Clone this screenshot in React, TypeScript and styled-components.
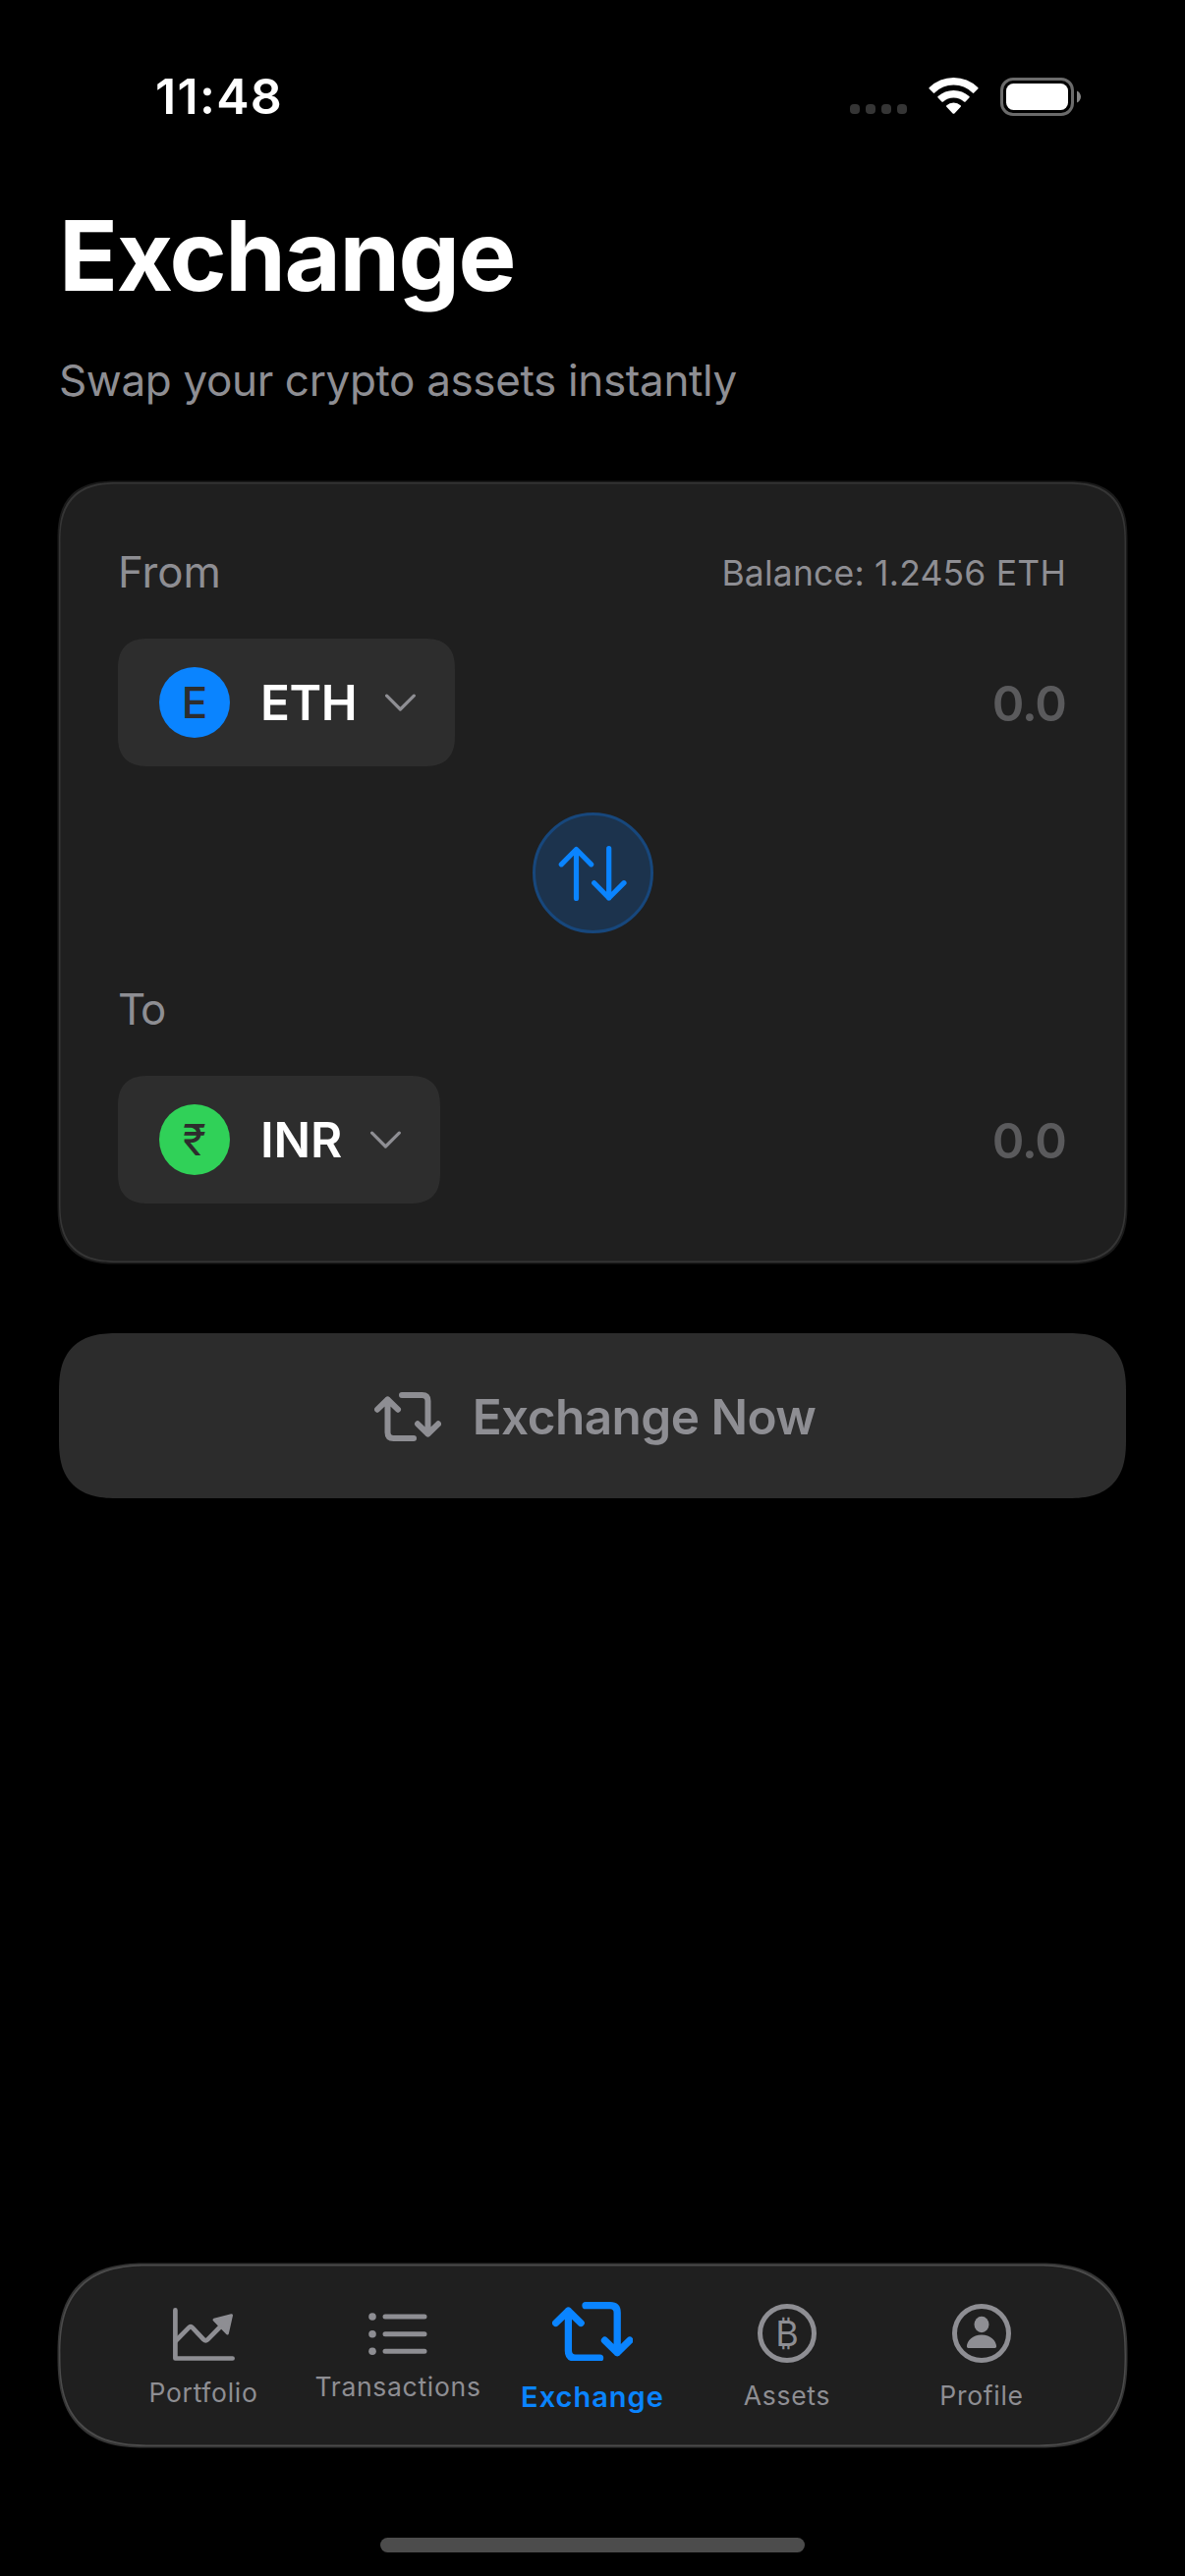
import React from 'react';
import styled, { createGlobalStyle, css } from 'styled-components';

const colors = {
  blue: '#0a84ff',
  green: '#30d158',
  gray: '#8e8e93',
  panel: '#1f1f1f',
  pill: '#2d2d2d',
  button: '#2c2c2c',
};

/* Smooth iOS style corners, with a plain rounded fallback. */
const smoothCorners = (plain: number, smooth: number) => css`
  border-radius: ${plain}px;
  @supports (corner-shape: superellipse(1.4)) {
    border-radius: ${smooth}px;
    corner-shape: superellipse(1.38);
  }
`;

const GlobalStyle = createGlobalStyle`
  * { box-sizing: border-box; }
  body {
    margin: 0;
    background: #000;
    font-family: Inter, "Liberation Sans", sans-serif;
  }
  button { font: inherit; border: 0; margin: 0; color: inherit; }
  svg { display: block; flex: none; }
`;

const Screen = styled.div`
  display: flex;
  flex-direction: column;
  width: 1206px;
  height: 2622px;
  background: #000;
  overflow: hidden;
`;

const StatusBar = styled.header`
  display: flex;
  justify-content: space-between;
  align-items: center;
  height: 120px;
  margin-top: 38px;
  padding: 0 106px 0 158px;
`;

const Clock = styled.time`
  font-size: 50px;
  font-weight: 600;
  line-height: 60px;
  letter-spacing: 1.3px;
  color: #fff;
`;

const StatusIcons = styled.div`
  display: flex;
  align-items: center;
`;

const SignalDots = styled.div`
  display: flex;
  gap: 6px;
  margin: 25px 22px 0 0;
`;

const SignalDot = styled.span`
  width: 10px;
  height: 10px;
  border-radius: 4px;
  background: #353535;
`;

const BatteryWrap = styled.span`
  margin-left: 22px;
`;

const Content = styled.main`
  display: flex;
  flex-direction: column;
  flex: 1;
  padding: 41px 60px 0;
`;

const Title = styled.h1`
  margin: 0;
  font-size: 99px;
  font-weight: 700;
  line-height: 122px;
  letter-spacing: -1.5px;
  color: #fff;
`;

const Subtitle = styled.p`
  margin: 39px 0 77px;
  font-size: 44px;
  line-height: 54px;
  letter-spacing: -0.36px;
  color: ${colors.gray};
`;

const SwapCard = styled.section`
  display: flex;
  flex-direction: column;
  padding: 60px;
  background: ${colors.panel};
  ${smoothCorners(48, 60)}
  box-shadow: 0 0 0 1.5px rgba(255, 255, 255, 0.1),
    inset 0 0 0 1.5px rgba(255, 255, 255, 0.1);
`;

const FieldHeader = styled.div`
  display: flex;
  justify-content: space-between;
  height: 99px;
`;

const FieldLabel = styled.span<{ $tracking: number }>`
  font-size: 43.8px;
  line-height: 64px;
  letter-spacing: ${(p) => p.$tracking}px;
  color: ${colors.gray};
`;

const Balance = styled.span`
  margin-right: 1px;
  font-size: 35.5px;
  line-height: 66px;
  letter-spacing: 0.2px;
  color: ${colors.gray};
`;

const FieldRow = styled.div`
  display: flex;
  justify-content: space-between;
  align-items: center;
`;

const CurrencyPill = styled.button`
  display: flex;
  align-items: center;
  height: 130px;
  padding: 0 40px 0 42px;
  background: ${colors.pill};
  ${smoothCorners(26, 32)}
`;

const CurrencyBadge = styled.span<{ $color: string; $weight: number }>`
  display: flex;
  align-items: center;
  justify-content: center;
  width: 72px;
  height: 72px;
  border-radius: 50%;
  background: ${(p) => p.$color};
  color: ${colors.pill};
  font-size: 44px;
  font-weight: ${(p) => p.$weight};
  line-height: 72px;
`;

const CurrencyCode = styled.span<{ $tracking: number }>`
  margin: 0 29px 0 31px;
  font-size: 49.5px;
  font-weight: 600;
  line-height: 60px;
  letter-spacing: ${(p) => p.$tracking}px;
  color: #fff;
`;

const Amount = styled.span`
  margin-right: 1px;
  padding-top: 2px;
  font-size: 49.5px;
  font-weight: 600;
  line-height: 60px;
  letter-spacing: -1px;
  color: #5a5a5c;
`;

const SwapButton = styled.button`
  display: flex;
  align-items: center;
  justify-content: center;
  align-self: center;
  width: 123px;
  height: 123px;
  margin: 47px 0 46px;
  padding: 0;
  border-radius: 50%;
  border: 3px solid #17477c;
  background: #1c334d;
  color: ${colors.blue};
`;

const ExchangeButton = styled.button`
  display: flex;
  align-items: center;
  justify-content: center;
  gap: 32px;
  height: 168px;
  margin-top: 72px;
  padding: 2px 0 0 5px;
  background: ${colors.button};
  color: ${colors.gray};
  font-size: 49.5px;
  font-weight: 600;
  line-height: 60px;
  letter-spacing: -0.55px;
  ${smoothCorners(48, 60)}
`;

const TabBar = styled.nav`
  display: flex;
  height: 185px;
  margin: 0 60px;
  padding: 0 48px;
  background: ${colors.panel};
  ${smoothCorners(76, 92)}
  box-shadow: 0 0 0 1.5px rgba(255, 255, 255, 0.2),
    inset 0 0 0 1.5px rgba(255, 255, 255, 0.2);
`;

const Tab = styled.a<{ $active?: boolean; $top: number }>`
  display: flex;
  flex-direction: column;
  align-items: center;
  width: 198px;
  padding-top: ${(p) => p.$top}px;
  color: ${(p) => (p.$active ? colors.blue : colors.gray)};
`;

const TabLabel = styled.span<{ $active?: boolean; $gap: number }>`
  margin-top: ${(p) => p.$gap}px;
  font-size: ${(p) => (p.$active ? 29 : 26.5)}px;
  font-weight: ${(p) => (p.$active ? 600 : 400)};
  letter-spacing: ${(p) => (p.$active ? 1 : 0.7)}px;
  line-height: 32px;
`;

const CoinRing = styled.span`
  display: flex;
  align-items: center;
  justify-content: center;
  width: 60px;
  height: 60px;
  border: 5px solid currentColor;
  border-radius: 50%;
  font-size: 36px;
  font-weight: 400;
  line-height: 50px;
`;

const HomeArea = styled.footer`
  display: flex;
  justify-content: center;
  height: 132px;
  padding-top: 93px;
`;

const HomeIndicator = styled.span`
  width: 432px;
  height: 15px;
  border-radius: 8px;
  background: #4c4c4c;
`;

const WifiIcon = () => (
  <svg width="51" height="38" viewBox="0 0 51 38" fill="#fff">
    <path d="M.8 11.6Q-.1 10.8.8 10Q11.2 0 25.5 0T50.2 10Q51.1 10.8 50.2 11.6L46.2 15.6Q45.5 16.3 44.8 15.6Q36.8 7.6 25.5 7.6T6.2 15.6Q5.5 16.3 4.8 15.6Z" />
    <path d="M9.6 20.5Q8.8 19.7 9.6 18.9Q16.4 12.9 25.5 12.9T41.4 18.9Q42.2 19.7 41.4 20.5L37.6 24.4Q36.8 25.1 36 24.4Q31.6 20.5 25.5 20.5T15 24.4Q14.2 25.1 13.4 24.4Z" />
    <path d="M18.3 29.7Q17.6 29 18.4 28.3Q21.3 25.5 25.5 25.5T32.6 28.3Q33.4 29 32.7 29.7L26.4 36.4Q25.5 37.3 24.6 36.4Z" />
  </svg>
);

const BatteryIcon = () => (
  <svg width="82" height="39" viewBox="0 0 82 39">
    <rect x="1.5" y="1.5" width="72" height="36" rx="11.5" fill="none" stroke="#6b6b6b" strokeWidth="3" />
    <rect x="6" y="6" width="63" height="27" rx="7.5" fill="#fff" />
    <path d="M78 13.5C80.5 14.5 82 17 82 19.5S80.5 24.5 78 25.5Z" fill="#858585" />
  </svg>
);

const ChevronDown = () => (
  <svg width="31" height="18" viewBox="0 0 31 18" fill="none" stroke="#8e8e93" strokeWidth="3.2" strokeLinecap="round" strokeLinejoin="round">
    <path d="M1.6 2.2L15.4 16L29.3 2.2" />
  </svg>
);

const SwapArrows = () => (
  <svg width="70" height="56" viewBox="0 0 70 56" fill="none" stroke="currentColor" strokeWidth="5.2" strokeLinecap="round" strokeLinejoin="round">
    <path d="M18.5 53.5V3.5M3.3 18.8L18.5 3.5L33.7 18.8" />
    <path d="M51.7 2.7V53M36.7 37.7L51.7 53L67 37.7" />
  </svg>
);

const ExchangeIcon = ({ width }: { width: number }) => (
  <svg width={width} height={(width * 50) / 68} viewBox="0 0 68 50" fill="none" stroke="currentColor" strokeWidth="6" strokeLinecap="round" strokeLinejoin="round">
    <path d="M3 17.7L13.5 7.5L24 17.7M13.5 7.5V41Q13.5 47 19.5 47H40" />
    <path d="M65 32.3L54.5 42.5L44 32.3M54.5 42.5V9Q54.5 3 48.5 3H28" />
  </svg>
);

const PortfolioIcon = () => (
  <svg width="63" height="54" viewBox="0 0 63 54" fill="none" stroke="currentColor" strokeWidth="4.7" strokeLinecap="round" strokeLinejoin="round">
    <path d="M2.4 2.4V51.5H60.6" />
    <path d="M3 33.5L16 20.3Q18 18.3 20 20.3L31.3 32.3Q33.3 34.3 35.3 32.3L50 17.5" />
    <path d="M42 12.3L59.5 7.7L55.4 26Z" fill="currentColor" strokeWidth="3" />
  </svg>
);

const ListIcon = () => (
  <svg width="60" height="43" viewBox="0 0 60 43" fill="none" stroke="currentColor" strokeWidth="5" strokeLinecap="round">
    <path d="M17 4H57M17 21.7H57M17 39.3H57" />
    <g fill="currentColor" stroke="none">
      <circle cx="4" cy="4" r="3.8" />
      <circle cx="4" cy="21.7" r="3.8" />
      <circle cx="4" cy="39.2" r="3.8" />
    </g>
  </svg>
);

const ProfileIcon = () => (
  <svg width="60" height="60" viewBox="0 0 60 60" fill="currentColor">
    <circle cx="30" cy="30" r="27.5" fill="none" stroke="currentColor" strokeWidth="5" />
    <ellipse cx="30" cy="21" rx="7.5" ry="8.2" />
    <path d="M16.5 45Q14.8 45 14.9 43.3C15.2 37.5 21 31.5 30 31.5S44.8 37.5 45.1 43.3Q45.2 45 43.5 45Z" />
  </svg>
);

interface CurrencyFieldProps {
  label: string;
  tracking: number;
  balance?: string;
  symbol: string;
  symbolWeight: number;
  color: string;
  code: string;
  codeTracking: number;
}

const CurrencyField = ({ label, tracking, balance, symbol, symbolWeight, color, code, codeTracking }: CurrencyFieldProps) => (
  <div>
    <FieldHeader>
      <FieldLabel $tracking={tracking}>{label}</FieldLabel>
      {balance && <Balance>{balance}</Balance>}
    </FieldHeader>
    <FieldRow>
      <CurrencyPill>
        <CurrencyBadge $color={color} $weight={symbolWeight}>
          {symbol}
        </CurrencyBadge>
        <CurrencyCode $tracking={codeTracking}>{code}</CurrencyCode>
        <ChevronDown />
      </CurrencyPill>
      <Amount>0.0</Amount>
    </FieldRow>
  </div>
);

const tabs = [
  { label: 'Portfolio', icon: <PortfolioIcon />, top: 44, gap: 16 },
  { label: 'Transactions', icon: <ListIcon />, top: 49, gap: 16 },
  { label: 'Exchange', icon: <ExchangeIcon width={82.6} />, top: 37.5, gap: 21, active: true },
  { label: 'Assets', icon: <CoinRing>₿</CoinRing>, top: 40, gap: 17 },
  { label: 'Profile', icon: <ProfileIcon />, top: 40, gap: 17 },
];

export default function App() {
  return (
    <Screen>
      <GlobalStyle />
      <StatusBar>
        <Clock>11:48</Clock>
        <StatusIcons>
          <SignalDots>
            <SignalDot />
            <SignalDot />
            <SignalDot />
            <SignalDot />
          </SignalDots>
          <WifiIcon />
          <BatteryWrap>
            <BatteryIcon />
          </BatteryWrap>
        </StatusIcons>
      </StatusBar>

      <Content>
        <Title>Exchange</Title>
        <Subtitle>Swap your crypto assets instantly</Subtitle>
        <SwapCard>
          <CurrencyField label="From" tracking={0} balance="Balance: 1.2456 ETH" symbol="E" symbolWeight={500} color={colors.blue} code="ETH" codeTracking={-0.5} />
          <SwapButton aria-label="Swap currencies">
            <SwapArrows />
          </SwapButton>
          <CurrencyField label="To" tracking={-1.8} symbol="₹" symbolWeight={400} color={colors.green} code="INR" codeTracking={-0.2} />
        </SwapCard>
        <ExchangeButton>
          <ExchangeIcon width={68} />
          Exchange Now
        </ExchangeButton>
      </Content>

      <TabBar>
        {tabs.map((tab) => (
          <Tab key={tab.label} $active={tab.active} $top={tab.top}>
            {tab.icon}
            <TabLabel $active={tab.active} $gap={tab.gap}>
              {tab.label}
            </TabLabel>
          </Tab>
        ))}
      </TabBar>
      <HomeArea>
        <HomeIndicator />
      </HomeArea>
    </Screen>
  );
}
